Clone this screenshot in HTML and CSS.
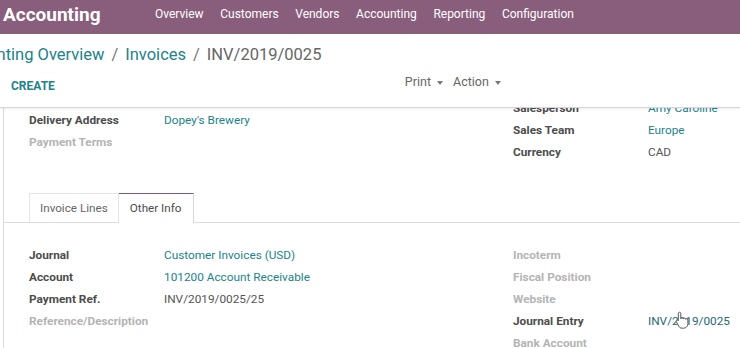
FILE: index.html
```html
<!DOCTYPE html>
<html lang="en">
  <head>
    <meta charset="UTF-8" />
    <title>INV/2019/0025 - Accounting</title>
    <link rel="stylesheet" href="styles.css">
  </head>
  <body>
    <nav class="navbar">
      <span class="brand">Accounting</span>
      <ul class="menu">
        <li>Overview</li>
        <li>Customers</li>
        <li>Vendors</li>
        <li>Accounting</li>
        <li>Reporting</li>
        <li>Configuration</li>
      </ul>
    </nav>

    <div class="control-panel">
      <div class="breadcrumb">
        <a href="#">Accounting Overview</a><span class="sep">/</span><a href="#">Invoices</a><span class="sep">/</span><span class="current">INV/2019/0025</span>
      </div>
      <div class="cp-bottom">
        <button class="btn-create">CREATE</button>
        <div class="sidebar">
          <span class="dropdown">Print<i class="caret"></i></span>
          <span class="dropdown">Action<i class="caret"></i></span>
        </div>
      </div>
    </div>

    <div class="content">
      <div class="sheet">
        <div class="groups top-groups">
          <div class="group group-left">
            <div class="field"><span class="label">Delivery Address</span><a class="value link" href="#">Dopey's Brewery</a></div>
            <div class="field"><span class="label empty">Payment Terms</span><span class="value"></span></div>
          </div>
          <div class="group group-right">
            <div class="field"><span class="label">Salesperson</span><a class="value link" href="#">Amy Caroline</a></div>
            <div class="field"><span class="label">Sales Team</span><a class="value link" href="#">Europe</a></div>
            <div class="field"><span class="label">Currency</span><span class="value">CAD</span></div>
          </div>
        </div>

        <ul class="nav-tabs">
          <li class="tab">Invoice Lines</li>
          <li class="tab active">Other Info</li>
        </ul>

        <div class="groups tab-groups">
          <div class="group">
            <div class="field"><span class="label">Journal</span><a class="value link" href="#">Customer Invoices (USD)</a></div>
            <div class="field"><span class="label">Account</span><a class="value link" href="#">101200 Account Receivable</a></div>
            <div class="field"><span class="label">Payment Ref.</span><span class="value">INV/2019/0025/25</span></div>
            <div class="field"><span class="label empty">Reference/Description</span><span class="value"></span></div>
          </div>
          <div class="group">
            <div class="field"><span class="label empty">Incoterm</span><span class="value"></span></div>
            <div class="field"><span class="label empty">Fiscal Position</span><span class="value"></span></div>
            <div class="field"><span class="label empty">Website</span><span class="value"></span></div>
            <div class="field">
              <span class="label">Journal Entry</span>
              <a class="value link hovered" href="#">INV/2019/0025</a>
              <!-- mouse pointer -->
              <svg class="cursor" width="14" height="18" viewBox="0 0 14 18">
                <path d="M4.5 1.2c.8 0 1.3.6 1.3 1.3v5.2c.2-.6.7-.9 1.3-.9.7 0 1.2.5 1.2 1.1.2-.5.7-.8 1.2-.8.7 0 1.2.5 1.2 1.2.2-.3.6-.5 1-.5.7 0 1.2.5 1.2 1.2v3.6c0 2.7-1.8 4.6-4.5 4.6H7.1c-1.6 0-2.6-.8-3.4-2L1.4 10.9c-.4-.6-.2-1.3.3-1.6.5-.3 1.1-.2 1.5.3l.1.2V2.5c0-.7.5-1.3 1.2-1.3z" fill="#fff" stroke="#555" stroke-width="1"/>
              </svg>
            </div>
            <div class="field"><span class="label empty">Bank Account</span><span class="value"></span></div>
          </div>
        </div>
      </div>
    </div>
  </body>
</html>
```

FILE: styles.css
```css
/* General */
body {
  margin: 0;
  font-family: Roboto, "Noto Sans", sans-serif;
  font-size: 11.8px;
  color: #4c4c4c;
  background-color: #fff;
  width: 740px;
  height: 348px;
  overflow: hidden;
}
a {
  text-decoration: none;
}

/* Top navbar */
.navbar {
  display: flex;
  align-items: center;
  height: 28px;
  padding-bottom: 6px;
  background-color: #895e7c;
  color: #fff;
}
.brand {
  padding-left: 3px;
  font-size: 19px;
  font-weight: bold;
  width: 152px;
}
.menu {
  display: flex;
  gap: 16.6px;
  margin: 0;
  padding: 0;
  list-style: none;
  font-size: 12px;
}

/* Control panel */
.control-panel {
  height: 73px;
  border-bottom: 1px solid #d6d6d6;
  box-shadow: 0 1px 2px rgba(0, 0, 0, 0.08);
  position: relative;
  z-index: 2;
  background-color: #fff;
  overflow: hidden;
}
.breadcrumb {
  margin: 10px 0 0 -50px;
  font-size: 16.5px;
  line-height: 22px;
  white-space: nowrap;
  color: #666;
}
.breadcrumb a {
  color: #21838a;
}
.breadcrumb .sep {
  margin: 0 7px;
  color: #777;
}
.cp-bottom {
  display: flex;
  align-items: center;
  margin-top: 9px;
}
.btn-create {
  border: none;
  background: none;
  padding: 0;
  margin-left: 11px;
  font-family: inherit;
  font-size: 12px;
  font-weight: bold;
  color: #21838a;
  position: relative;
  top: 3px;
}
.sidebar {
  display: flex;
  gap: 10px;
  margin-left: 350px;
  font-size: 12.5px;
  color: #666;
  position: relative;
  top: -1px;
}
.caret {
  display: inline-block;
  width: 0;
  height: 0;
  margin-left: 6px;
  vertical-align: middle;
  border-top: 4px solid #777;
  border-left: 3px solid transparent;
  border-right: 3px solid transparent;
}

/* Scrolled form view */
.content {
  height: 240px;
  overflow: hidden;
}
.sheet {
  margin-left: 3px;
  border-left: 1px solid #dcdcdc;
  padding-left: 25px;
  height: 100%;
}
.groups {
  display: flex;
}
.group {
  width: 484px;
  flex-shrink: 0;
}
.group-left {
  margin-top: 1px;
}
.group-right {
  margin-top: -11px;
}
.field {
  display: grid;
  grid-template-columns: 135px 1fr;
  align-items: center;
  height: 22px;
  position: relative;
}
.label {
  font-weight: bold;
  color: #4c4c4c;
}
.label.empty {
  color: #b4b4b4;
}
.value {
  color: #555;
}
.value.link {
  color: #21838a;
}
.value.hovered {
  color: #1f6a72;
}
.top-groups {
  height: 56px;
}

/* Notebook tabs */
.nav-tabs {
  display: flex;
  margin: 29px 0 0 -25px;
  padding: 0 0 0 25px;
  list-style: none;
  border-bottom: 1px solid #dcdcdc;
}
.tab {
  padding: 0 10px;
  height: 28px;
  line-height: 29px;
  font-size: 11.7px;
  border: 1px solid #e4e4e4;
  border-bottom: none;
  color: #666;
  margin-bottom: -1px;
  background-color: #fff;
}
.tab.active {
  padding: 0 11px;
  color: #4c4c4c;
  border-color: #d6d6d6;
  border-top-color: #7d5b6e;
  border-left: none;
  height: 29px;
}
.tab-groups {
  margin-top: 21px;
}
.cursor {
  position: absolute;
  left: 162px;
  top: 1px;
}
```
